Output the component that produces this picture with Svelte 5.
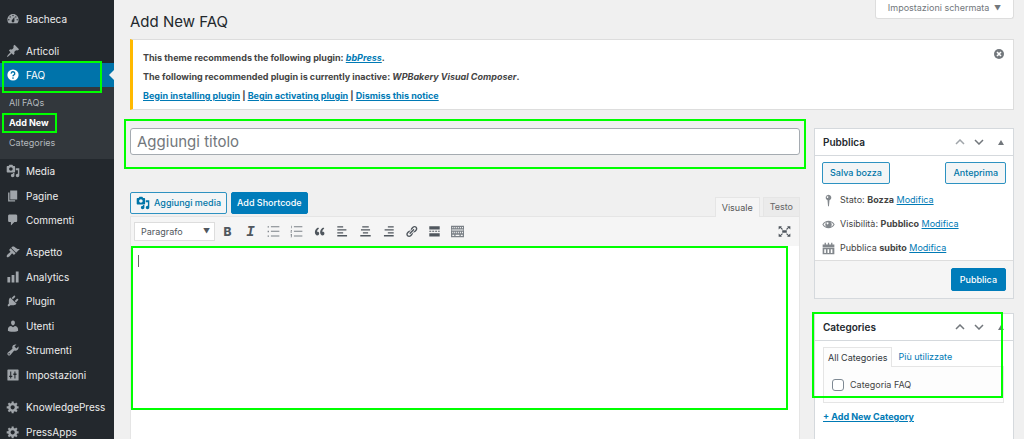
<script lang="ts">
	const icons: Record<string, string> = {
		dashboard: 'M3.76 16h12.48c1.1-1.37 1.76-3.11 1.76-5 0-4.42-3.58-8-8-8s-8 3.58-8 8c0 1.89.66 3.63 1.76 5zM10 4c.55 0 1 .45 1 1s-.45 1-1 1-1-.45-1-1 .45-1 1-1zM6 6c.55 0 1 .45 1 1s-.45 1-1 1-1-.45-1-1 .45-1 1-1zm8 0c.55 0 1 .45 1 1s-.45 1-1 1-1-.45-1-1 .45-1 1-1zm-5.37 5.55L12 7v6c0 1.1-.9 2-2 2s-2-.9-2-2c0-.57.24-1.08.63-1.45zM4 10c.55 0 1 .45 1 1s-.45 1-1 1-1-.45-1-1 .45-1 1-1zm12 0c.55 0 1 .45 1 1s-.45 1-1 1-1-.45-1-1 .45-1 1-1z',
		pin: 'M10.44 3.02l1.82-1.82 6.36 6.35-1.83 1.82c-1.05-.68-2.48-.57-3.41.36l-.75.75c-.92.93-1.04 2.35-.35 3.41l-1.83 1.82-2.41-2.41-2.8 2.79c-.42.42-3.38 2.71-3.8 2.29s1.86-3.39 2.28-3.81l2.79-2.79L4.1 9.36l1.83-1.82c1.05.69 2.48.57 3.4-.36l.75-.75c.93-.92 1.05-2.35.36-3.41z',
		media: 'M13 11V4c0-.55-.45-1-1-1h-1.67L9 1H5L3.67 3H2c-.55 0-1 .45-1 1v7c0 .55.45 1 1 1h10c.55 0 1-.45 1-1zM7 4.5c1.38 0 2.5 1.12 2.5 2.5S8.38 9.5 7 9.5 4.5 8.38 4.5 7 5.62 4.5 7 4.5zM14 6h5v10.5c0 1.38-1.12 2.5-2.5 2.5S14 17.88 14 16.5s1.12-2.5 2.5-2.5c.17 0 .34.02.5.05V9h-3V6zm-4 8.05V13h2v3.5c0 1.38-1.12 2.5-2.5 2.5S7 17.88 7 16.5 8.12 14 9.5 14c.17 0 .34.02.5.05z',
		page: 'M6 15V2h10v13H6zm-1 1h8v2H3V5h2v11z',
		comment: 'M5 2h9c1.1 0 2 .9 2 2v7c0 1.1-.9 2-2 2h-2l-5 5v-5H5c-1.1 0-2-.9-2-2V4c0-1.1.9-2 2-2z',
		brush: 'M14.48 11.06L7.41 3.99l1.5-1.5c.5-.56 2.3-.47 3.51.32 1.21.8 1.43 1.28 2.91 2.1 1.18.64 2.45 1.26 4.45.85zm-.71.71L6.7 4.7 4.93 6.47c-.39.39-.39 1.02 0 1.41l1.06 1.06c.39.39.39 1.03 0 1.42-.6.6-1.43 1.11-2.21 1.69-.35.26-.7.53-1.01.84C1.43 14.23.4 16.08 1.4 17.07c.99 1 2.84-.03 4.18-1.36.31-.31.58-.66.85-1.02.57-.78 1.08-1.61 1.69-2.21.39-.39 1.02-.39 1.41 0l1.06 1.06c.39.39 1.02.39 1.41 0z',
		chart: 'M18 18V2h-4v16h4zm-6 0V7H8v11h4zm-6 0v-8H2v8h4z',
		plugin: 'M13.11 4.36L9.87 7.6 8 5.73l3.24-3.24c.35-.34 1.05-.2 1.56.32.52.51.66 1.21.31 1.55zm-8 1.77l.91-1.12 9.01 9.01-1.19.84c-.71.71-2.63 1.16-3.82 1.16H6.14L4.9 17.26c-.59.59-1.54.59-2.12 0-.59-.58-.59-1.53 0-2.12l1.24-1.24v-3.88c0-1.13.4-3.19 1.09-3.89zm7.26 3.97l3.24-3.24c.34-.35 1.04-.21 1.55.31.52.51.66 1.21.31 1.55l-3.24 3.25z',
		user: 'M10 9.25c-2.27 0-2.73-3.44-2.73-3.44C7 4.02 7.82 2 9.97 2c2.16 0 2.98 2.02 2.71 3.81 0 0-.41 3.44-2.68 3.44zm0 2.57L12.72 10c2.39 0 4.52 2.33 4.52 4.53v2.49s-3.65 1.13-7.24 1.13c-3.65 0-7.24-1.13-7.24-1.13v-2.49c0-2.25 1.94-4.48 4.47-4.48z',
		tools: 'M16.68 9.77c-1.34 1.34-3.3 1.67-4.95.99l-5.41 6.52c-.99.99-2.59.99-3.58 0s-.99-2.59 0-3.57l6.52-5.42c-.68-1.65-.35-3.61.99-4.95 1.28-1.28 3.12-1.62 4.72-1.06l-2.89 2.89 2.82 2.82 2.86-2.87c.53 1.58.18 3.39-1.08 4.65zM3.81 16.21c.4.39 1.04.39 1.43 0 .4-.4.4-1.04 0-1.43-.39-.4-1.03-.4-1.43 0-.39.39-.39 1.03 0 1.43z',
		settings: 'M3 2h14q1 0 1 1v14q0 1-1 1H3q-1 0-1-1V3q0-1 1-1zM6 5v6H4.5v2H6v2h1.5v-2H9v-2H7.5V5zm6 0v3h-1.5v2H12v5h1.5v-5H15V8h-1.5V5z',
		gear: 'M18 12h-2.18c-.17.7-.44 1.35-.81 1.93l1.54 1.54-2.1 2.1-1.54-1.54c-.58.36-1.23.63-1.91.79V19H8v-2.18c-.68-.16-1.33-.43-1.91-.79l-1.54 1.54-2.12-2.12 1.54-1.54c-.36-.58-.63-1.23-.79-1.91H1V9.03h2.17c.16-.7.44-1.35.8-1.94L2.43 5.55l2.1-2.1 1.54 1.54c.58-.37 1.24-.64 1.93-.81V2h3v2.18c.68.16 1.33.43 1.91.79l1.54-1.54 2.12 2.12-1.54 1.54c.36.59.64 1.24.8 1.94H18V12zm-8.5 1.5c1.66 0 3-1.34 3-3s-1.34-3-3-3-3 1.34-3 3 1.34 3 3 3z',
		ul: 'M1 2h2v2H1zm5 0h13v1.5H6zM1 9h2v2H1zm5 0h13v1.5H6zM1 16h2v2H1zm5 0h13v1.5H6z',
		ol: 'M2 1h1v4H2zm4 1h13v1.5H6zM1 7.500h2v2.500H2v1h1v1H1v-2.500h1v-1H1zM6 9h13v1.5H6zM1 14h2v5H1v-1h1v-1H1v-1h1v-1H1zm5 2h13v1.5H6z',
		quote: 'M9.49 13.22c0-.74-.2-1.38-.61-1.9-.62-.78-1.83-.88-2.53-.72-.29-1.65 1.11-3.75 2.92-4.65L7.88 4c-2.73 1.3-5.42 4.28-4.96 8.05C3.21 14.43 4.59 16 6.54 16c.85 0 1.56-.25 2.12-.75s.83-1.18.83-2.03zm8.05 0c0-.74-.2-1.38-.61-1.9-.63-.78-1.83-.88-2.53-.72-.29-1.65 1.11-3.75 2.92-4.65L15.93 4c-2.73 1.3-5.41 4.28-4.95 8.05.29 2.38 1.66 3.95 3.61 3.95.85 0 1.56-.25 2.12-.75s.83-1.18.83-2.03z',
		left: 'M2 2h9v2H2zm0 4.500h14v2H2zM2 11h9v2H2zm0 4.500h15v2H2z',
		center: 'M5 2h10v2H5zM3 6.500h14v2H3zM6 11h8v2H6zm-4 4.500h16v2H2z',
		right: 'M9 2h9v2H9zM4 6.500h14v2H4zM9 11h9v2H9zm-6 4.500h15v2H3z',
		link: 'M17.74 2.76c1.68 1.69 1.68 4.41 0 6.1l-1.53 1.52c-1.12 1.12-2.7 1.47-4.14 1.09l2.62-2.61.76-.77.76-.76c.84-.84.84-2.2 0-3.04-.84-.85-2.2-.85-3.04 0l-.77.76-3.38 3.38c-.37-1.44-.02-3.02 1.1-4.14l1.52-1.53c1.69-1.68 4.42-1.68 6.1 0zM8.59 13.43l5.34-5.34c.42-.42.42-1.1 0-1.52-.44-.43-1.13-.39-1.53 0l-5.33 5.34c-.42.42-.42 1.1 0 1.52.44.43 1.13.39 1.52 0zm-.76 2.29l4.14-4.15c.38 1.44.03 3.02-1.09 4.14l-1.52 1.53c-1.69 1.68-4.41 1.68-6.1 0-1.68-1.68-1.68-4.42 0-6.1l1.53-1.52c1.12-1.12 2.7-1.47 4.14-1.1l-4.14 4.15c-.85.84-.85 2.2 0 3.05.84.84 2.2.84 3.04 0z',
		more: 'M2 2h16v5H2zm0 7h3v1.500H2zm4.500 0h3v1.500h-3zM11 9h3v1.500h-3zm4.500 0H18v1.500h-2.500zM2 12.500h16v5H2z',
		keyboard: 'M0 1h20v18H0zM2 3v2h1.5V3zm3 0v2h1.5V3zm3 0v2h1.5V3zm3 0v2h1.5V3zm3 0v2h1.5V3zm3 0v2h1.5V3zM1 7v1.500h18V7zm1 3.500v2h1.5v-2zm3 0v2h1.5v-2zm3 0v2h1.5v-2zm3 0v2h1.5v-2zm3 0v2h1.5v-2zm3 0v2h1.5v-2zM2 15v2h3v-2zm5 0v2h6v-2zm8 0v2h3v-2z',
		fullscreen: 'M1 2h5L4.7 3.5 7.5 6.3 6.3 7.5 3.5 4.7 1 7zm18 0h-5l1.3 1.5-2.8 2.8 1.2 1.2 2.8-2.8L19 7zM1 18h5l-1.3-1.5 2.8-2.8-1.2-1.2-2.8 2.8L1 13zm18 0h-5l1.3-1.5-2.8-2.8 1.2-1.2 2.8 2.8L19 13zM6.500 8h7v4h-7z',
		marker: 'M10 1a4.5 4.5 0 0 1 1.5 8.7L10.7 19H9.3L8.5 9.7A4.5 4.5 0 0 1 10 1zM8.5 3.5a1.2 1.2 0 1 0 .1 0z',
		eye: 'M.5 10Q4 4.2 10 4.2T19.5 10Q16 15.8 10 15.8T.5 10zM2.3 10q1.7 3 4.7 4-2-1.5-2-4t2-4q-3 1-4.7 4zM17.7 10q-1.7-3-4.7-4 2 1.5 2 4t-2 4q3-1 4.7-4zM8.500 6.500a1.500 1.500 0 1 0 .1 0z',
		calendar: 'M4 1h2v3h3V1h2v3h3V1h2v3h3v4H1V4h3zM1 9h18v10H1zM3.500 11v6h2.500v-6zm5 0v6H11v-6zm5 0v6H16v-6z'
	};

	const menuGroups = [
		[
			{ label: 'Media', icon: 'media' },
			{ label: 'Pagine', icon: 'page' },
			{ label: 'Commenti', icon: 'comment' }
		],
		[
			{ label: 'Aspetto', icon: 'brush' },
			{ label: 'Analytics', icon: 'chart' },
			{ label: 'Plugin', icon: 'plugin' },
			{ label: 'Utenti', icon: 'user' },
			{ label: 'Strumenti', icon: 'tools' },
			{ label: 'Impostazioni', icon: 'settings' }
		],
		[
			{ label: 'KnowledgePress', icon: 'gear' },
			{ label: 'PressApps', icon: 'gear' }
		]
	];

	const tools = [
		{ icon: 'ul', title: 'Elenco puntato' },
		{ icon: 'ol', title: 'Elenco numerato' },
		{ icon: 'quote', title: 'Citazione' },
		{ icon: 'left', title: 'Allinea a sinistra' },
		{ icon: 'center', title: 'Allinea al centro' },
		{ icon: 'right', title: 'Allinea a destra' },
		{ icon: 'link', title: 'Inserisci link' },
		{ icon: 'more', title: 'Inserisci tag Leggi tutto' },
		{ icon: 'keyboard', title: 'Mostra barra strumenti' }
	];

	let title = $state('');
	let faqCategory = $state(false);
</script>

{#snippet icon(name: string)}
	<svg class="icon" viewBox="0 0 20 20" fill="currentColor" fill-rule="evenodd" aria-hidden="true">
		<path d={icons[name]} />
	</svg>
{/snippet}

{#snippet menuItem(label: string, name: string)}
	<a href="#{name}" class="menu-item">{@render icon(name)}{label}</a>
{/snippet}

{#snippet boxHeader(label: string, first: boolean)}
	<div class="box-header">
		<h2>{label}</h2>
		<button class="handle" class:disabled={first} aria-label="Sposta su">
			<svg width="10" height="6" viewBox="0 0 10 6" fill="none" stroke="currentColor" stroke-width="1.5"><path d="M1 5l4-4 4 4" /></svg>
		</button>
		<button class="handle" aria-label="Sposta giù">
			<svg width="10" height="6" viewBox="0 0 10 6" fill="none" stroke="currentColor" stroke-width="1.5"><path d="M1 1l4 4 4-4" /></svg>
		</button>
		<button class="handle toggle" aria-label="Chiudi pannello">
			<svg width="6" height="5" viewBox="0 0 6 5" fill="currentColor"><path d="M3 0l3 5H0z" /></svg>
		</button>
	</div>
{/snippet}

<div class="admin">
	<nav class="sidebar">
		<div class="group">{@render menuItem('Bacheca', 'dashboard')}</div>
		<div class="group open">
			{@render menuItem('Articoli', 'pin')}
			<a href="#faq" class="menu-item current highlight">
				<svg class="icon" viewBox="0 0 20 20" aria-hidden="true">
					<circle cx="10" cy="10" r="8" fill="#fff" />
					<path d="M7.5 8a2.5 2.5 0 1 1 3.5 2.2q-1 .5-1 1.6" fill="none" stroke="#0073aa" stroke-width="2" />
					<circle cx="10" cy="14.3" r="1.2" fill="#0073aa" />
				</svg>FAQ
			</a>
			<div class="submenu">
				<a href="#all">All FAQs</a>
				<a href="#new" class="active highlight">Add New</a>
				<a href="#categories">Categories</a>
			</div>
		</div>
		{#each menuGroups as group}
			<div class="group">
				{#each group as item}
					{@render menuItem(item.label, item.icon)}
				{/each}
			</div>
		{/each}
	</nav>

	<main>
		<header>
			<h1>Add New FAQ</h1>
			<button class="screen-options">Impostazioni schermata <span>▼</span></button>
		</header>

		<section class="notice">
			<div>
				<p>This theme recommends the following plugin: <a href="#bbpress"><em>bbPress</em></a>.</p>
				<p>The following recommended plugin is currently inactive: <em>WPBakery Visual Composer</em>.</p>
				<p><a href="#install">Begin installing plugin</a> | <a href="#activate">Begin activating plugin</a> | <a href="#dismiss">Dismiss this notice</a></p>
			</div>
			<button class="dismiss" aria-label="Nascondi questa notifica">
				<svg width="10" height="10" viewBox="0 0 10 10"><circle cx="5" cy="5" r="5" fill="#72777c" /><path d="M3 3l4 4M7 3L3 7" stroke="#fff" stroke-width="1.6" /></svg>
			</button>
		</section>

		<div class="columns">
			<div class="content">
				<div class="title-wrap highlight">
					<input type="text" placeholder="Aggiungi titolo" aria-label="Aggiungi titolo" bind:value={title} />
				</div>

				<div class="editor-tools">
					<button class="button media-button">{@render icon('media')}Aggiungi media</button>
					<button class="button primary">Add Shortcode</button>
					<div class="tabs">
						<button class="tab selected">Visuale</button>
						<button class="tab">Testo</button>
					</div>
				</div>

				<div class="editor">
					<div class="toolbar">
						<div class="format">
							<select aria-label="Formato">
								<option>Paragrafo</option>
								<option>Titolo 1</option>
								<option>Titolo 2</option>
							</select>
							<span>▼</span>
						</div>
						<button class="tool bold" title="Grassetto">B</button>
						<button class="tool italic" title="Corsivo">I</button>
						{#each tools as tool}
							<button class="tool {tool.icon}" title={tool.title} aria-label={tool.title}>{@render icon(tool.icon)}</button>
						{/each}
						<button class="tool last" title="Schermo intero" aria-label="Schermo intero">{@render icon('fullscreen')}</button>
					</div>
					<div class="editor-body highlight" role="textbox" aria-label="Contenuto" tabindex="0">
						<span class="caret"></span>
					</div>
				</div>
			</div>

			<aside>
				<section class="box">
					{@render boxHeader('Pubblica', true)}
					<div class="publish">
						<div class="publish-actions">
							<button class="button">Salva bozza</button>
							<button class="button">Anteprima</button>
						</div>
						<p>{@render icon('marker')}<span>Stato: <b>Bozza</b> <a href="#status">Modifica</a></span></p>
						<p>{@render icon('eye')}<span>Visibilità: <b>Pubblico</b> <a href="#visibility">Modifica</a></span></p>
						<p>{@render icon('calendar')}<span>Pubblica <b>subito</b> <a href="#date">Modifica</a></span></p>
					</div>
					<div class="publish-footer">
						<button class="button primary">Pubblica</button>
					</div>
				</section>

				<section class="box categories highlight">
					{@render boxHeader('Categories', false)}
					<div class="category-body">
						<div class="category-tabs">
							<button class="selected">All Categories</button>
							<button>Più utilizzate</button>
						</div>
						<div class="category-panel">
							<label><input type="checkbox" bind:checked={faqCategory} />Categoria FAQ</label>
						</div>
						<a href="#add-category" class="add-category">+ Add New Category</a>
					</div>
				</section>
			</aside>
		</div>
	</main>
</div>

<style>
	:global(body) {
		margin: 0;
		background: #f0f0f0;
	}

	.admin {
		display: flex;
		height: 100vh;
		overflow: hidden;
		font-family: Inter, "Liberation Sans", sans-serif;
		font-size: 9px;
		line-height: 12px;
		color: #444;
	}

	.admin * {
		box-sizing: border-box;
	}

	button,
	input,
	select {
		margin: 0;
		font: inherit;
		color: inherit;
	}

	button {
		padding: 0;
		border: none;
		background: none;
		cursor: pointer;
	}

	a {
		color: #007ab5;
	}

	.icon {
		width: 14px;
		height: 14px;
		flex: none;
	}

	/* green frames drawn over the page */
	.highlight {
		position: relative;
	}

	.highlight::after {
		content: "";
		position: absolute;
		border: 2px solid #0f0;
		pointer-events: none;
		z-index: 2;
	}

	.sidebar {
		flex: none;
		width: 114px;
		padding-top: 7px;
		background: #23282d;
	}

	.group {
		margin-bottom: 8px;
	}

	.group.open {
		margin-bottom: 0;
	}

	.menu-item {
		display: flex;
		align-items: center;
		gap: 6px;
		height: 24px;
		padding-left: 6px;
		font-size: 10px;
		color: #eee;
		text-decoration: none;
	}

	.group:not(.open) .menu-item + .menu-item {
		margin-top: 1px;
		height: 24px;
	}

	.group:not(.open) .menu-item:nth-child(odd) {
		margin-top: 0;
	}

	.menu-item .icon {
		color: #a0a5aa;
	}

	.menu-item.current {
		background: #0073aa;
		color: #fff;
	}

	.menu-item.current::before {
		content: "";
		position: absolute;
		right: 0;
		top: 7px;
		border: 5px solid transparent;
		border-left: none;
		border-right-color: #f0f0f0;
	}

	.menu-item.current::after {
		inset: -2px 12px -6px 2px;
	}

	.submenu {
		padding: 6px 0;
		background: #32373c;
	}

	.submenu a {
		display: block;
		width: fit-content;
		padding: 4px 8px 4px 9px;
		color: #b4b9be;
		text-decoration: none;
	}

	.submenu .active {
		color: #fff;
		font-weight: 700;
	}

	.submenu .active::after {
		inset: 0 0 0 2px;
	}

	main {
		flex: 1;
		min-width: 0;
		padding: 0 10px 0 16px;
	}

	header {
		display: flex;
		justify-content: space-between;
		align-items: flex-start;
		height: 39px;
	}

	h1 {
		margin: 12px 0 0;
		font-size: 15px;
		line-height: 20px;
		font-weight: 400;
		color: #23282d;
	}

	.screen-options {
		height: 19px;
		padding: 0 12px 2px;
		border: 1px solid #ddd;
		border-top: none;
		border-radius: 0 0 3px 3px;
		background: #fff;
		color: #72777c;
	}

	.screen-options span {
		font-size: 7px;
		margin-left: 2px;
	}

	.notice {
		display: flex;
		justify-content: space-between;
		align-items: flex-start;
		padding: 9px 9px 3px 10px;
		border: 1px solid #ddd;
		border-left: 3px solid #ffb900;
		background: #fff;
		font-weight: 700;
	}

	.notice p {
		margin: 0;
		padding: 3px 0 4px;
	}

	.dismiss {
		display: flex;
	}

	.columns {
		display: flex;
		gap: 14px;
		margin-top: 18px;
	}

	.content {
		flex: 1;
		min-width: 0;
	}

	.title-wrap input {
		display: block;
		width: 100%;
		height: 27px;
		padding: 0 6px;
		border: 1px solid #a5abb1;
		border-radius: 3px;
		background: #fff;
		font-size: 15px;
	}

	.title-wrap input::placeholder {
		color: #72777c;
		opacity: 1;
	}

	.title-wrap::after {
		inset: -9px -6px -14px -6px;
	}

	.editor-tools {
		display: flex;
		align-items: flex-start;
		gap: 4px;
		margin-top: 37px;
		height: 24px;
	}

	.button {
		display: flex;
		align-items: center;
		gap: 4px;
		height: 22px;
		padding: 0 7px;
		border: 1px solid #2d92c1;
		border-radius: 2px;
		background: #f3f5f6;
		color: #0075a8;
		font-weight: 500;
	}

	.button.primary {
		padding: 0 5px;
		background: #007cba;
		border-color: #007cba;
		color: #fff;
	}

	.button.media-button {
		padding: 0 5px;
	}

	.tabs {
		display: flex;
		align-self: flex-end;
		gap: 3px;
		margin-left: auto;
	}

	.tab {
		height: 19px;
		padding: 0 6px;
		border: 1px solid #e5e5e5;
		border-bottom: none;
		background: #ebebeb;
		color: #666;
	}

	.tab.selected {
		position: relative;
		height: 20px;
		margin-bottom: -1px;
		background: #f5f5f5;
		color: #555;
	}

	.editor {
		border: 1px solid #e5e5e5;
		background: #fff;
	}

	.toolbar {
		display: flex;
		align-items: center;
		height: 29px;
		padding: 0 3px;
		background: #f5f5f5;
		color: #50575e;
	}

	.format {
		position: relative;
		margin-right: 1px;
	}

	.format select {
		display: block;
		appearance: none;
		width: 81px;
		height: 19px;
		padding: 0 6px;
		border: 1px solid #ddd;
		border-radius: 0;
		background: #fff;
	}

	.format span {
		position: absolute;
		right: 5px;
		top: 4px;
		font-size: 7px;
		pointer-events: none;
	}

	.tool {
		display: flex;
		align-items: center;
		justify-content: center;
		width: 23px;
		height: 20px;
	}

	.tool .icon {
		width: 13px;
		height: 13px;
	}

	.tool.ul,
	.tool.ol,
	.tool.keyboard {
		color: #7b8187;
	}

	.bold {
		font-size: 12px;
		font-weight: 800;
	}

	.italic {
		font-family: "Liberation Mono", monospace;
		font-size: 14px;
		font-style: italic;
		font-weight: 700;
	}

	.tool.last {
		margin-left: auto;
	}

	.editor-body {
		height: 240px;
		padding: 9px 7px;
	}

	.editor-body::after {
		inset: 0 11px 76px 0;
	}

	.caret {
		display: block;
		width: 1px;
		height: 12px;
		background: #666;
	}

	aside {
		flex: none;
		width: 200px;
	}

	.box {
		margin-bottom: 14px;
		border: 1px solid #d5d9dd;
		background: #fff;
	}

	.box-header {
		display: flex;
		align-items: center;
		height: 27px;
		padding: 0 9px 0 8px;
		border-bottom: 1px solid #d5d9dd;
	}

	h2 {
		flex: 1;
		margin: 0;
		font-size: 10px;
		font-weight: 600;
		color: #23282d;
	}

	.handle {
		display: flex;
		margin-left: 9px;
		color: #72777c;
	}

	.handle.disabled {
		color: #a0a5aa;
	}

	.handle.toggle {
		margin-left: 14px;
	}

	.publish {
		padding: 6px 7px 0;
	}

	.publish-actions {
		display: flex;
		justify-content: space-between;
		margin-bottom: 4px;
	}

	.publish p {
		display: flex;
		align-items: center;
		gap: 5px;
		height: 24px;
		margin: 0;
	}

	.publish .icon {
		width: 13px;
		height: 13px;
		color: #82878c;
	}

	.publish b {
		font-weight: 700;
	}

	.publish-footer {
		display: flex;
		justify-content: flex-end;
		padding: 7px;
		border-top: 1px solid #ddd;
		background: #f5f5f5;
	}

	.publish-footer .button.primary {
		height: 23px;
		padding: 0 8px;
	}

	.categories::after {
		inset: -2px 10px 41px -3px;
	}

	.category-body {
		padding: 6px 9px 16px 8px;
	}

	.category-tabs {
		display: flex;
		gap: 1px;
	}

	.category-tabs button {
		height: 19px;
		padding: 0 4px;
		border: 1px solid transparent;
		border-bottom: none;
		color: #007ab5;
	}

	.category-tabs .selected {
		position: relative;
		height: 20px;
		margin-bottom: -1px;
		border-color: #e5e5e5;
		background: #fdfdfd;
		color: #32373c;
	}

	.category-panel {
		padding: 12px 8px 11px;
		border: 1px solid #e5e5e5;
		background: #fdfdfd;
	}

	.category-panel label {
		display: flex;
		align-items: center;
		gap: 6px;
	}

	.category-panel input {
		appearance: none;
		width: 12px;
		height: 12px;
		border: 1px solid #7e8993;
		border-radius: 3px;
		background: #fff;
	}

	.add-category {
		display: inline-block;
		margin-top: 8px;
		font-weight: 700;
	}
</style>
